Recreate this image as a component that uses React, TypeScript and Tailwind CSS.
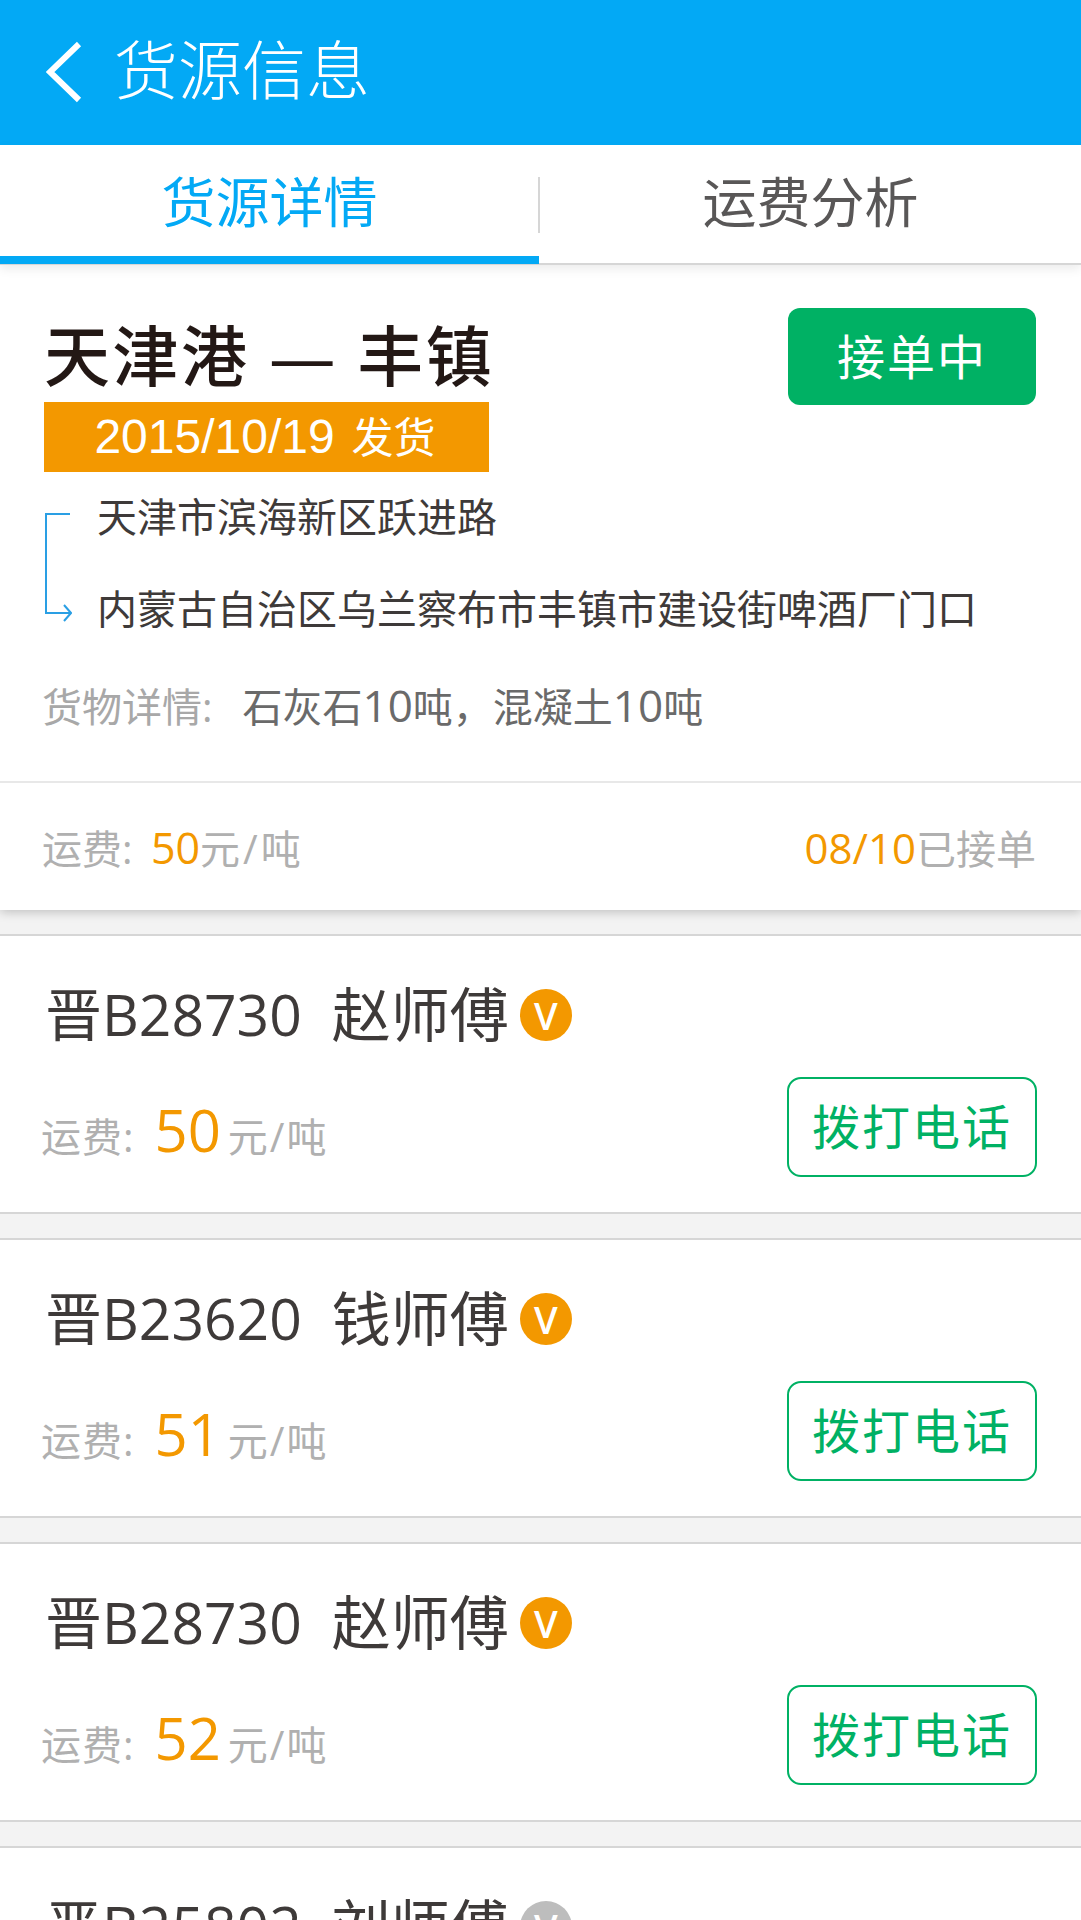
const FONT = 'font-["Open_Sans","Noto_Sans_CJK_SC",sans-serif]';

const drivers = [
  { plate: '晋B28730', name: '赵师傅', price: '50', verified: true },
  { plate: '晋B23620', name: '钱师傅', price: '51', verified: true },
  { plate: '晋B28730', name: '赵师傅', price: '52', verified: true },
  { plate: '晋B25802', name: '刘师傅', price: '50', verified: false },
];

const BackIcon = () => (
  <svg width="36" height="62" viewBox="0 0 36 62" fill="none" className="mt-[3px]">
    <path d="M33 3 L4 31 L33 59" stroke="#fff" strokeWidth="6" />
  </svg>
);

const RouteIcon = () => (
  <svg width="28" height="110" viewBox="0 0 28 110" fill="none" className="mt-[16px] shrink-0">
    <path d="M26 2 H2 V101 H26" stroke="#2a9fe4" strokeWidth="2" />
    <path d="M20 93 L27 101 L20 109" stroke="#2a9fe4" strokeWidth="2" />
  </svg>
);

const DriverCard = ({ plate, name, price, verified }: (typeof drivers)[number]) => (
  <>
    <div className="h-[24px] shrink-0 bg-[#f3f3f3]" />
    <section className="h-[280px] shrink-0 border-y-2 border-[#d6d6d6] bg-white pr-[44px] pl-[45px]">
      <div className="flex h-[101px] items-center pt-[56px] text-[#3e3a39]">
        <span className="text-[57px] leading-none">{plate}</span>
        <span className="ml-[30px] text-[59px] leading-none">{name}</span>
        <span
          className={`ml-[11px] flex size-[52px] items-center justify-center rounded-full text-[38px] leading-none font-semibold text-white ${verified ? 'bg-[#f39800]' : 'bg-[#bdbdbd]'}`}
        >
          V
        </span>
      </div>
      <div className="mt-[40px] flex items-start justify-between">
        <div className="-ml-[4px] flex items-baseline pt-[24px] text-[40px] leading-none text-[#b0b0b0]">
          <span className="tracking-[1px]">运费:</span>
          <span className="mr-[7px] ml-[20px] text-[58px] leading-none text-[#f39800]">{price}</span>
          <span className="tracking-[2px]">元/吨</span>
        </div>
        <button className="h-[100px] w-[250px] rounded-[14px] border-2 border-[#00b164] text-[48px] leading-none tracking-[2px] text-[#00b164]">
          拨打电话
        </button>
      </div>
    </section>
  </>
);

export default function App() {
  return (
    <div className={`flex h-[1920px] w-[1081px] flex-col overflow-hidden bg-white ${FONT}`}>
      <header className="flex h-[145px] shrink-0 items-center bg-[#03a9f5] pb-[5px] pl-[46px] text-white">
        <BackIcon />
        <h1 className="ml-[32px] text-[64px] leading-none font-light">货源信息</h1>
      </header>

      <nav className="relative z-10 flex h-[120px] shrink-0 border-b-2 border-[#d6d6d6] bg-white shadow-[0_4px_10px_rgba(0,0,0,0.08)]">
        <div className="flex h-[119px] w-[539px] items-start justify-center border-b-8 border-[#03a9f5] pt-[30px] text-[54px] leading-none text-[#03a9f5]">
          货源详情
        </div>
        <div className="mt-[32px] -ml-[1px] h-[56px] w-[2px] bg-[#d6d6d6]" />
        <div className="flex flex-1 items-start justify-center pt-[30px] text-[54px] leading-none text-[#595757]">
          运费分析
        </div>
      </nav>

      <section className="z-[5] h-[645px] shrink-0 bg-white shadow-[0_2px_10px_rgba(0,0,0,0.22)]">
        <div className="flex h-[518px] flex-col border-b-2 border-[#e8e8e8] pl-[44px]">
          <div className="flex items-start justify-between pr-[45px]">
            <div className="pt-[54px]">
              <h2 className="text-[66px] leading-[72px] font-medium tracking-[2.5px] whitespace-nowrap text-[#231815]">
                天津港 — 丰镇
              </h2>
              <div className="mt-[11px] flex h-[70px] w-[445px] items-center justify-center gap-[17px] bg-[#f39800] pr-[3px] text-white">
                <span className='font-["Liberation_Sans"] text-[48px] leading-none'>2015/10/19</span>
                <span className="text-[42px] leading-none">发货</span>
              </div>
            </div>
            <div className="mt-[43px] flex h-[97px] w-[248px] items-center justify-center rounded-[12px] bg-[#00b164] text-[48px] leading-none tracking-[2px] text-white">
              接单中
            </div>
          </div>
          <div className="mt-[24px] flex">
            <RouteIcon />
            <div className="ml-[25px] flex flex-col gap-[50px] text-[40px] leading-[42px] text-[#3e3a39]">
              <p>天津市滨海新区跃进路</p>
              <p className="whitespace-nowrap">内蒙古自治区乌兰察布市丰镇市建设街啤酒厂门口</p>
            </div>
          </div>
          <p className="mt-[54px] -ml-[2px] text-[40px] leading-[42px] text-[#a8a8a8]">
            货物详情:
            <span className="ml-[30px] text-[#6a6a6a]">
              石灰石<span className="text-[44px]">10</span>吨，混凝土<span className="text-[44px]">10</span>吨
            </span>
          </p>
        </div>
        <div className="flex h-[125px] items-center justify-between pt-[4px] pr-[45px] pl-[42px] text-[40px] leading-none text-[#b0b0b0]">
          <p>
            运费: <span className="ml-[8px] text-[43px] text-[#f39800]">50</span>
            <span className="tracking-[3px]">元/吨</span>
          </p>
          <p>
            <span className="text-[42px] text-[#f39800]">08/10</span>已接单
          </p>
        </div>
      </section>

      {drivers.map((driver, index) => (
        <DriverCard key={index} {...driver} />
      ))}
    </div>
  );
}
